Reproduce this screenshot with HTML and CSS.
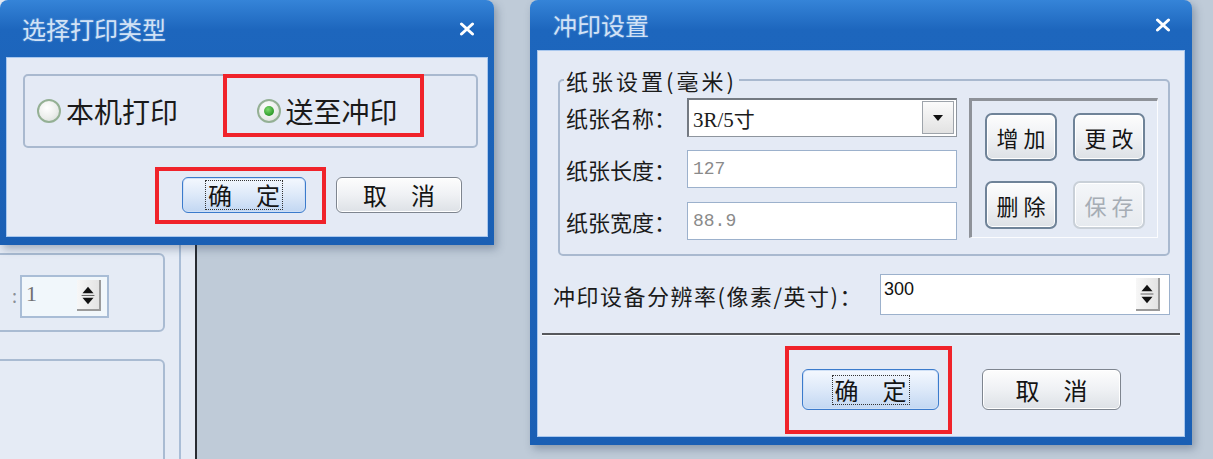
FILE: index.html
```html
<!DOCTYPE html>
<html lang="zh-CN">
<head>
    <meta charset="UTF-8">
    <meta name="viewport" content="width=device-width, initial-scale=1.0">
    <title>冲印设置</title>
    <link rel="stylesheet" href="styles.css">
</head>
<body>
    <div class="desktop">
        <!-- application behind the dialogs -->
        <div class="app-strip">
            <div class="app-main">
                <div class="app-panel app-panel-top">
                    <span class="app-label">:</span>
                    <div class="spin spin-small">
                        <span class="spin-value serif">1</span>
                        <span class="spin-btn">
                            <svg width="24" height="28" viewBox="0 0 24 28"><path d="M6 12 L12 5 L18 12 Z" fill="#111"/><path d="M5 14.5 H19" stroke="#555" stroke-width="1"/><path d="M6 17 L12 24 L18 17 Z" fill="#111"/></svg>
                        </span>
                    </div>
                </div>
                <div class="app-panel app-panel-bottom"></div>
            </div>
        </div>

        <!-- dialog: choose print type -->
        <div class="window window-print">
            <div class="titlebar">
                <span class="title">选择打印类型</span>
                <svg class="close" width="16" height="14" viewBox="0 0 16 14"><path d="M2.5 2 L13.5 12 M13.5 2 L2.5 12" stroke="#fff" stroke-width="3" stroke-linecap="round"/></svg>
            </div>
            <div class="window-body">
                <div class="print-types">
                    <label class="radio-option">
                        <span class="radio"></span>本机打印
                    </label>
                    <label class="radio-option">
                        <span class="radio checked"><span class="dot"></span></span>送至冲印
                    </label>
                </div>
                <div class="actions actions-print">
                    <button class="btn btn-default btn-ok-small"><span class="focus">确　定</span></button>
                    <button class="btn btn-cancel-small">取　消</button>
                </div>
            </div>
            <div class="mark mark-send"></div>
            <div class="mark mark-ok-small"></div>
        </div>

        <!-- dialog: photo print settings -->
        <div class="window window-photo">
            <div class="titlebar">
                <span class="title">冲印设置</span>
                <svg class="close" width="16" height="14" viewBox="0 0 16 14"><path d="M2.5 2 L13.5 12 M13.5 2 L2.5 12" stroke="#fff" stroke-width="3" stroke-linecap="round"/></svg>
            </div>
            <div class="window-body">
                <fieldset class="paper">
                    <legend>纸张设置(毫米)</legend>
                    <div class="paper-inner">
                        <div class="paper-fields">
                            <div class="field-row">
                                <span class="field-label">纸张名称：</span>
                                <div class="combo">
                                    <span class="combo-value">3R/5寸</span>
                                    <span class="combo-btn">
                                        <svg width="12" height="8" viewBox="0 0 12 8"><path d="M1 1 H11 L6 7 Z" fill="#111"/></svg>
                                    </span>
                                </div>
                            </div>
                            <div class="field-row">
                                <span class="field-label">纸张长度：</span>
                                <div class="text-input">127</div>
                            </div>
                            <div class="field-row">
                                <span class="field-label">纸张宽度：</span>
                                <div class="text-input">88.9</div>
                            </div>
                        </div>
                        <div class="paper-buttons">
                            <button class="btn btn-small">增加</button>
                            <button class="btn btn-small">更改</button>
                            <button class="btn btn-small">删除</button>
                            <button class="btn btn-small" disabled>保存</button>
                        </div>
                    </div>
                </fieldset>

                <div class="resolution-row">
                    <span class="resolution-label">冲印设备分辨率(像素/英寸)：</span>
                    <div class="spin spin-wide">
                        <span class="spin-value">300</span>
                        <span class="spin-btn">
                            <svg width="24" height="32" viewBox="0 0 24 32"><path d="M6 13 L12 6 L18 13 Z" fill="#111"/><path d="M5 16 H19" stroke="#555" stroke-width="1"/><path d="M6 19 L12 26 L18 19 Z" fill="#111"/></svg>
                        </span>
                    </div>
                </div>

                <div class="separator"></div>

                <div class="actions actions-photo">
                    <button class="btn btn-default btn-ok"><span class="focus">确　定</span></button>
                    <button class="btn btn-cancel">取　消</button>
                </div>
            </div>
            <div class="mark mark-ok"></div>
        </div>
    </div>
</body>
</html>
```

FILE: styles.css
```css
* {
    box-sizing: border-box;
}

body {
    margin: 0;
    width: 1213px;
    height: 459px;
    overflow: hidden;
    background-color: #bfcbd8;
    font-family: "Noto Sans CJK SC", sans-serif;
    color: #1b1b1b;
}

.desktop {
    position: relative;
    width: 1213px;
    height: 459px;
}

/* app behind */

.app-strip {
    position: absolute;
    left: 0;
    top: 0;
    width: 197px;
    height: 459px;
    display: flex;
    background-color: #e5ebf5;
    border-right: 2px solid #272b31;
}

.app-main {
    width: 181px;
    border-right: 2px solid #a9bdd6;
    padding-top: 253px;
    display: flex;
    flex-direction: column;
    gap: 27px;
    overflow: hidden;
}

.app-panel {
    flex: none;
    margin-left: -40px;
    width: 205px;
    border: 2px solid #a9bbd2;
    border-radius: 6px;
}

.app-panel-top {
    height: 79px;
    display: flex;
    align-items: flex-start;
    padding-top: 20px;
}

.app-panel-bottom {
    height: 200px;
}

.app-label {
    width: 55px;
    margin-right: 3px;
    text-align: right;
    font-size: 18px;
    line-height: 40px;
    color: #8a8f96;
    white-space: nowrap;
}

/* windows */

.window {
    position: absolute;
    top: 0;
    display: flex;
    flex-direction: column;
    background: linear-gradient(#3584d8, #1d66bd 30px, #1a5fb4);
    border-radius: 8px 8px 0 0;
    box-shadow: 3px 4px 8px rgba(40, 60, 90, 0.35);
}

.window-print {
    left: 0;
    width: 494px;
    height: 245px;
    padding: 0 6px 8px;
}

.window-photo {
    left: 530px;
    width: 662px;
    height: 445px;
    padding: 0 7px 8px;
}

.titlebar {
    flex: none;
    display: flex;
    align-items: center;
    justify-content: space-between;
    color: #d2e2f5;
    font-size: 24px;
    line-height: 28px;
}

.window-print .titlebar {
    height: 57px;
    padding: 0 13px 0 16px;
}

.window-photo .titlebar {
    height: 50px;
    padding: 0 14px 0 16px;
}

.title {
    text-shadow: 0 0 2px rgba(160, 200, 245, 0.6);
}

.window-body {
    flex: 1;
    background-color: #e4eaf5;
    border: 1px solid #a8c7ee;
}

/* print type dialog */

.print-types {
    height: 74px;
    margin: 16px 9px 0 16px;
    border: 2px solid #a9b9cf;
    border-radius: 5px;
    display: flex;
    align-items: center;
}

.radio-option {
    width: 220px;
    display: flex;
    align-items: center;
    gap: 5px;
    font-size: 28px;
    line-height: 34px;
    color: #1a1a1a;
}

.radio-option:first-child {
    margin-left: 12px;
}

.radio {
    width: 24px;
    height: 24px;
    border: 2px solid #94b094;
    border-radius: 50%;
    background: radial-gradient(circle at 40% 35%, #ffffff, #eceeec 55%, #d2d8d2);
    display: flex;
    align-items: center;
    justify-content: center;
}

.radio .dot {
    width: 10px;
    height: 10px;
    border-radius: 50%;
    background: radial-gradient(circle at 40% 35%, #7fdc6f, #2f9a2a 70%);
}

.actions {
    display: flex;
    justify-content: flex-end;
}

.actions-print {
    margin-top: 29px;
    padding-right: 25px;
    gap: 30px;
}

.actions-photo {
    margin-top: 33px;
    padding-right: 63px;
    gap: 43px;
}

.btn {
    display: flex;
    align-items: center;
    justify-content: center;
    padding: 0;
    font-family: "Noto Sans CJK SC", sans-serif;
    font-size: 24px;
    line-height: 28px;
    color: #141414;
    border: 1px solid #7e858f;
    border-radius: 6px;
    background: linear-gradient(#fdfdfd, #eff1f4 50%, #dde1e6);
    box-shadow: inset 0 0 0 1px #ffffff;
}

.btn-default {
    border-color: #3b7bcc;
    background: linear-gradient(#f4f8fe, #dde9f9 50%, #c2d7f2);
    box-shadow: inset 0 0 0 1px #cfe0f6;
}

.btn-ok-small {
    width: 124px;
    height: 36px;
}

.btn-cancel-small {
    width: 126px;
    height: 36px;
}

.btn-ok {
    width: 137px;
    height: 41px;
}

.btn-cancel {
    width: 139px;
    height: 41px;
}

.focus {
    border: 1px dotted #333;
    padding: 0 2px;
}

.mark {
    position: absolute;
    border: 4px solid #f0232a;
    pointer-events: none;
}

.mark-send {
    left: 223px;
    top: 74px;
    width: 201px;
    height: 63px;
}

.mark-ok-small {
    left: 155px;
    top: 167px;
    width: 171px;
    height: 57px;
}

.mark-ok {
    left: 255px;
    top: 346px;
    width: 167px;
    height: 88px;
}

/* photo settings dialog */

.paper {
    margin: 17px 14px 0 20px;
    padding: 6px 10px 14px 6px;
    border: 2px solid #a9b9cf;
    border-radius: 5px;
    min-width: 0;
}

.paper legend {
    margin-left: -2px;
    padding: 0 2px;
    font-size: 22px;
    line-height: 24px;
    letter-spacing: 3px;
}

.paper-inner {
    display: flex;
    gap: 12px;
}

.paper-fields {
    width: 391px;
    display: flex;
    flex-direction: column;
    gap: 14px;
}

.field-row {
    height: 38px;
    display: flex;
    align-items: center;
}

.field-label {
    width: 121px;
    flex: none;
    font-size: 22px;
    line-height: 26px;
    white-space: nowrap;
}

.combo {
    flex: 1;
    height: 39px;
    display: flex;
    align-items: center;
    justify-content: space-between;
    background-color: #fff;
    border: 1px solid #8e959e;
    border-top: 2px solid #747a82;
    border-left: 2px solid #747a82;
}

.combo-value {
    padding-left: 4px;
    font-family: "Liberation Serif", "Noto Sans CJK SC", serif;
    font-size: 21px;
}

.combo-btn {
    width: 32px;
    height: 33px;
    margin-right: 2px;
    display: flex;
    align-items: center;
    justify-content: center;
    background: linear-gradient(#fbfbfb, #e2e2e2);
    border: 1px solid #9ea4ab;
}

.text-input {
    flex: 1;
    height: 38px;
    display: flex;
    align-items: center;
    padding-left: 5px;
    background-color: #fff;
    border: 1px solid #9cb1cc;
    font-family: "Liberation Mono", monospace;
    font-size: 18px;
    color: #8a8a8a;
}

.paper-buttons {
    width: 189px;
    height: 140px;
    padding: 12px 0 0 13px;
    display: grid;
    grid-template-columns: 72px 72px;
    grid-auto-rows: 48px;
    column-gap: 16px;
    row-gap: 20px;
    border-top: 3px solid #8e9299;
    border-left: 3px solid #8e9299;
    border-right: 1px solid #fbfcfe;
    border-bottom: 1px solid #fbfcfe;
}

.btn-small {
    font-size: 22px;
    letter-spacing: 5px;
    padding-left: 5px;
    border: 2px solid #6f8398;
    border-radius: 7px;
}

.btn-small:disabled {
    color: #a6adb5;
    border-color: #c9d0d8;
    background: linear-gradient(#f4f6f9, #e6eaef);
}

.resolution-row {
    margin-top: 18px;
    padding-left: 15px;
    display: flex;
    align-items: center;
}

.resolution-label {
    width: 327px;
    font-size: 22px;
    line-height: 26px;
    letter-spacing: 1.5px;
    white-space: nowrap;
}

.spin {
    display: flex;
    justify-content: space-between;
    border: 1px solid #9cb1cc;
    background-color: #fff;
}

.spin-wide {
    width: 290px;
    height: 41px;
    padding: 3px 9px 3px 3px;
}

.spin-small {
    width: 89px;
    height: 43px;
    border-width: 2px;
    border-color: #a9bdd6;
    background-color: #f1f7fb;
    padding: 3px 6px 5px 4px;
}

.spin-value {
    font-family: "Liberation Sans", sans-serif;
    font-size: 18px;
    line-height: 22px;
    color: #111;
}

.spin-value.serif {
    font-family: "Liberation Serif", serif;
    font-size: 22px;
    line-height: 28px;
    color: #707070;
}

.spin-btn {
    width: 24px;
    display: flex;
    align-items: center;
    justify-content: center;
    background: linear-gradient(90deg, #f7f7f7, #e3e3e3);
    border-right: 2px solid #9a9a9a;
    border-bottom: 2px solid #9a9a9a;
}

.separator {
    margin: 18px 4px 0;
    height: 3px;
    border-top: 2px solid #56585c;
    border-bottom: 1px solid #f8fbff;
}
```
